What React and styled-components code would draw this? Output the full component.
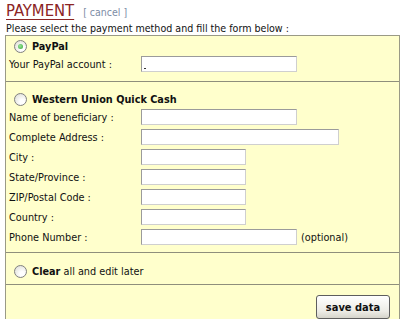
import styled, { createGlobalStyle } from "styled-components";

const GlobalStyle = createGlobalStyle`
  html, body {
    margin: 0;
    padding: 0;
    background: #fff;
  }
  body {
    font-family: "DejaVu Sans", Verdana, sans-serif;
    font-stretch: condensed;
    font-size: 10.8px;
    color: #111;
  }
`;

const Page = styled.div`
  padding: 0 5px;
  width: 395px;
`;

const Header = styled.div`
  display: flex;
  align-items: baseline;
  gap: 9px;
  height: 22px;
  padding-left: 1px;
`;

const Title = styled.span`
  font-family: "DejaVu Sans", Verdana, sans-serif;
  font-stretch: condensed;
  font-size: 16.5px;
  color: #8b2424;
  text-decoration: underline;
  text-decoration-thickness: 1px;
  text-underline-offset: 3px;
  line-height: 21px;
`;

const Cancel = styled.span`
  color: #7d8da6;
  font-size: 10.5px;
`;

const Intro = styled.div`
  padding-left: 1px;
  height: 13px;
  line-height: 13px;
  font-size: 10.6px;
`;

const Panel = styled.div`
  border: 1px solid #9a9a86;
  border-bottom: none;
  background: #ffffcc;
`;

const Section = styled.div`
  padding: ${({ $pad }) => $pad};
  border-bottom: ${({ $last }) => ($last ? "none" : "1px solid #8f8f7c")};
`;

const Heading = styled.label`
  display: flex;
  align-items: center;
  gap: 5px;
  height: 16px;
  padding-left: 8px;
  font-weight: ${({ $bold }) => ($bold ? 700 : 400)};
`;

const Strong = styled.b`
  font-weight: 700;
`;

const Radio = styled.span`
  position: relative;
  width: 11px;
  height: 11px;
  border-radius: 50%;
  border: 1px solid #808080;
  background: radial-gradient(circle at 65% 70%, #ffffff 20%, #e3e3dc 80%);
  flex: none;

  &::after {
    content: "";
    display: ${({ $checked }) => ($checked ? "block" : "none")};
    position: absolute;
    left: 3px;
    top: 3px;
    width: 5px;
    height: 5px;
    border-radius: 50%;
    background: radial-gradient(circle at 40% 40%, #9be39b, #34a934);
  }
`;

const Field = styled.div`
  display: grid;
  grid-template-columns: 132px auto auto;
  align-items: center;
  justify-content: start;
  height: 20px;
  padding-left: 3px;
`;

const Input = styled.div`
  box-sizing: border-box;
  width: ${({ $w }) => $w}px;
  height: 16px;
  background: #fff;
  border: 1px solid #9b9b9b;
  border-right-color: #cfcfcf;
  border-bottom-color: #cfcfcf;
  position: relative;
`;

const Caret = styled.span`
  position: absolute;
  left: 2px;
  bottom: 2px;
  width: 2px;
  height: 1px;
  background: #333;
`;

const Note = styled.span`
  padding-left: 4px;
`;

const Actions = styled.div`
  display: flex;
  justify-content: flex-end;
  padding-right: 9px;
`;

const Button = styled.button`
  width: 74px;
  height: 24px;
  border: 1px solid #5e5e5e;
  border-radius: 3px;
  background: linear-gradient(#ffffff, #ecebe5 70%, #d6d4cb);
  font-family: "DejaVu Sans", Verdana, sans-serif;
  font-stretch: condensed;
  font-size: 11px;
  font-weight: 700;
  color: #111;
  padding: 0;
`;

const westernFields = [
  { label: "Name of beneficiary :", w: 156 },
  { label: "Complete Address :", w: 198 },
  { label: "City :", w: 105 },
  { label: "State/Province :", w: 105 },
  { label: "ZIP/Postal Code :", w: 105 },
  { label: "Country :", w: 105 },
  { label: "Phone Number :", w: 156, note: "(optional)" },
];

export default function App() {
  return (
    <Page>
      <GlobalStyle />
      <Header>
        <Title>PAYMENT</Title>
        <Cancel>[ cancel ]</Cancel>
      </Header>
      <Intro>Please select the payment method and fill the form below :</Intro>
      <Panel>
        <Section $pad="2px 0 7px 0">
          <Heading $bold>
            <Radio $checked />
            PayPal
          </Heading>
          <Field>
            <span>Your PayPal account :</span>
            <Input $w={156}>
              <Caret />
            </Input>
          </Field>
        </Section>
        <Section $pad="9px 0 5px 0">
          <Heading $bold>
            <Radio />
            Western Union Quick Cash
          </Heading>
          {westernFields.map((f) => (
            <Field key={f.label}>
              <span>{f.label}</span>
              <Input $w={f.w} />
              {f.note && <Note>{f.note}</Note>}
            </Field>
          ))}
        </Section>
        <Section $pad="10px 0 5px 0">
          <Heading>
            <Radio />
            <span>
              <Strong>Clear</Strong> all and edit later
            </span>
          </Heading>
        </Section>
        <Section $pad="10px 0 0 0" $last>
          <Actions>
            <Button>save data</Button>
          </Actions>
        </Section>
      </Panel>
    </Page>
  );
}
